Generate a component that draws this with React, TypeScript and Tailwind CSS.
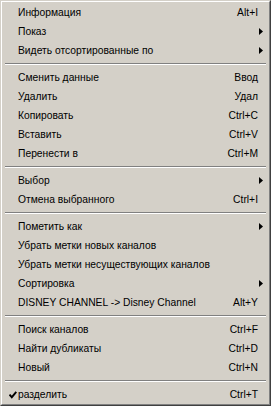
type Item = {
  label: string;
  shortcut?: string;
  submenu?: boolean;
  checked?: boolean;
};

const groups: Item[][] = [
  [
    { label: "Информация", shortcut: "Alt+I" },
    { label: "Показ", submenu: true },
    { label: "Видеть отсортированные по", submenu: true },
  ],
  [
    { label: "Сменить данные", shortcut: "Ввод" },
    { label: "Удалить", shortcut: "Удал" },
    { label: "Копировать", shortcut: "Ctrl+C" },
    { label: "Вставить", shortcut: "Ctrl+V" },
    { label: "Перенести в", shortcut: "Ctrl+M" },
  ],
  [
    { label: "Выбор", submenu: true },
    { label: "Отмена выбранного", shortcut: "Ctrl+I" },
  ],
  [
    { label: "Пометить как", submenu: true },
    { label: "Убрать метки новых каналов" },
    { label: "Убрать метки несуществующих каналов" },
    { label: "Сортировка", submenu: true },
    { label: "DISNEY CHANNEL -> Disney Channel", shortcut: "Alt+Y" },
  ],
  [
    { label: "Поиск каналов", shortcut: "Ctrl+F" },
    { label: "Найти дубликаты", shortcut: "Ctrl+D" },
    { label: "Новый", shortcut: "Ctrl+N" },
  ],
  [{ label: "разделить", shortcut: "Ctrl+T", checked: true }],
];

function MenuRow({ item }: { item: Item }) {
  return (
    <div className="relative flex h-[19px] items-center pl-[15px] pr-[5px]">
      {item.checked && (
        <svg
          className="absolute left-[6px] top-[6px]"
          width="8"
          height="8"
          viewBox="0 0 8 8"
        >
          <path
            d="M0.5 3.5L2.8 6.2L7.3 0.8"
            fill="none"
            stroke="#000"
            strokeWidth="1.9"
          />
        </svg>
      )}
      <span className="flex-1 whitespace-nowrap">{item.label}</span>
      {item.shortcut && <span className="pr-[5px]">{item.shortcut}</span>}
      {item.submenu && (
        <svg width="4" height="7" viewBox="0 0 4 7">
          <path d="M0 0L4 3.5L0 7z" fill="#000" />
        </svg>
      )}
    </div>
  );
}

export default function App() {
  return (
    <div className="h-[406px] w-[271px] border border-t-[#d4d0c8] border-l-[#d4d0c8] border-b-[#404040] border-r-[#404040] bg-[#d4d0c8]">
      <div
        className="h-full border border-t-white border-l-white border-b-[#808080] border-r-[#808080] pt-px px-px text-[10.3px] text-black"
        style={{ fontFamily: '"Liberation Sans", Arial, sans-serif' }}
      >
        {groups.map((group, gi) => (
          <div key={gi}>
            {gi > 0 && (
              <div className="mx-[2px] py-[3px]">
                <div className="h-px bg-[#808080]" />
                <div className="h-px bg-white" />
              </div>
            )}
            {group.map((item) => (
              <MenuRow key={item.label} item={item} />
            ))}
          </div>
        ))}
      </div>
    </div>
  );
}
